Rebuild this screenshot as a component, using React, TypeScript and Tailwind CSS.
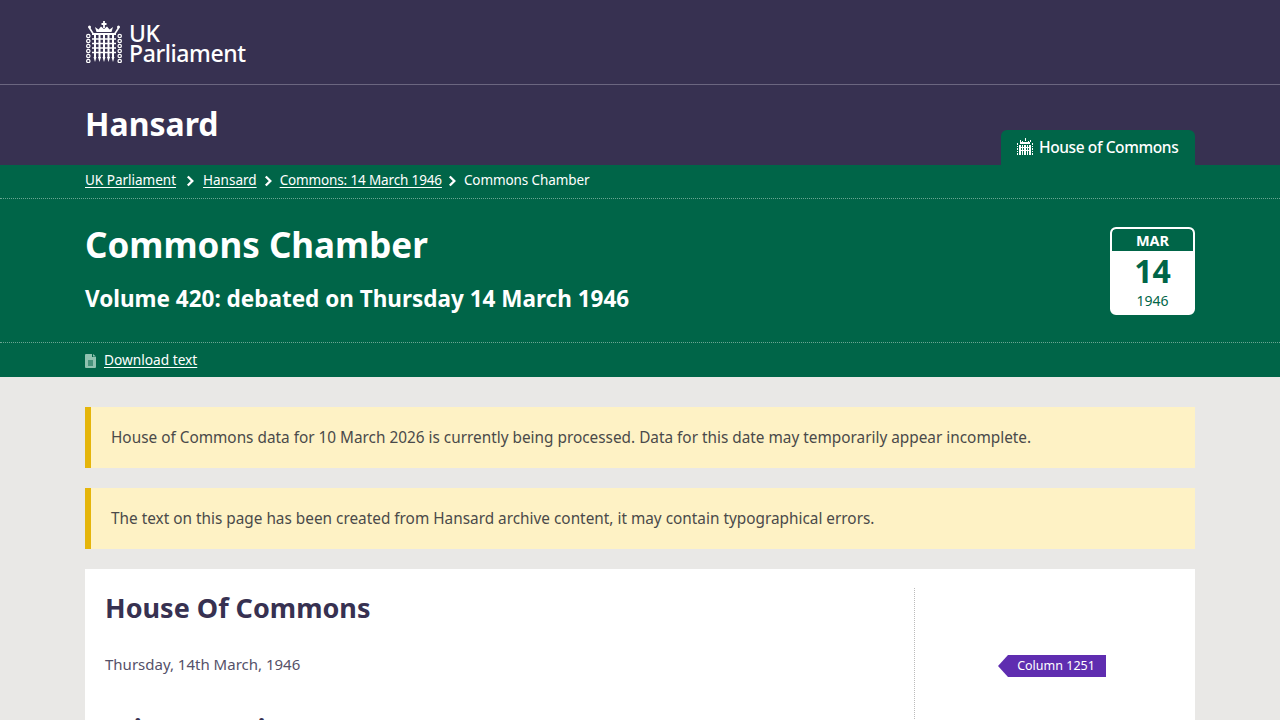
import React from "react";

const Portcullis = ({ className }: { className?: string }) => {
  const bars = [9, 13.5, 18, 22.5, 27];
  const chain = [15, 20, 25, 30, 35, 40];
  return (
    <svg viewBox="0 0 36 42" className={className} fill="none" stroke="#fff">
      <path d="M18 0v7M15.500 3h5" strokeWidth="1.800" />
      <path d="M9 6l1.500 5h15L27 6l-3.500 2.500L21 5.500l-3 2.500-3-2.500-2.500 3z" fill="#fff" stroke="none" />
      <circle cx="3.500" cy="6" r="1.500" fill="#fff" stroke="none" />
      <circle cx="32.500" cy="6" r="1.500" fill="#fff" stroke="none" />
      <path d="M3.500 7l3.500 5.500M32.500 7L29 12.500" strokeWidth="1.600" />
      <path d="M6 13h24" strokeWidth="2" />
      {bars.map((x) => (
        <path key={x} d={`M${x} 13v24`} strokeWidth="2" />
      ))}
      {bars.map((x) => (
        <path key={x} d={`M${x - 1.500} 36h3l-1.500 5z`} fill="#fff" stroke="none" />
      ))}
      {[18, 22.500, 27, 31.500].map((y) => (
        <path key={y} d={`M6 ${y}h24`} strokeWidth="1.500" />
      ))}
      {chain.map((y) => (
        <g key={y} strokeWidth="1.200">
          <circle cx="2.300" cy={y} r="1.700" />
          <circle cx="33.700" cy={y} r="1.700" />
        </g>
      ))}
    </svg>
  );
};

const SmallPortcullis = () => (
  <svg viewBox="0 0 16 19" className="w-[16px] h-[19px] shrink-0" fill="none" stroke="#fff" shapeRendering="crispEdges">
    <path d="M8 0v3M3 2v2M13 2v2M5 3v2M11 3v2" strokeWidth="1" />
    <path d="M3 5h10" strokeWidth="2" />
    <path d="M3 7v10M5.500 7v10M8 7v10M10.500 7v10M13 7v10" strokeWidth="1.100" />
    <path d="M3 9.500h10M3 12.500h10" strokeWidth="1" />
    <path d="M0.500 5v13M15.500 5v13" strokeWidth="1" strokeDasharray="1.500 1" />
  </svg>
);

const Chevron = () => (
  <svg viewBox="0 0 10 12" className="w-[9px] h-[12px] shrink-0" fill="none" stroke="#fff" strokeWidth="2.600">
    <path d="M2 1l5 5-5 5" />
  </svg>
);

const Notice = ({ children }: { children: React.ReactNode }) => (
  <div className="h-[61px] flex items-center bg-[#fef2c5] border-l-[6px] border-[#e5b50a] pl-5 text-[15.35px] text-[#4a4a4a]">
    {children}
  </div>
);

export default function App() {
  return (
    <div className="h-screen overflow-hidden bg-[#e9e8e6] font-['Noto_Sans',sans-serif]">
      <header className="bg-[#373151] border-b border-[#6b6680] h-[85px]">
        <div className="w-[1110px] mx-auto h-full flex items-center gap-[7px] pb-[1px]">
          <Portcullis className="w-[36px] h-[42px] ml-[1px]" />
          <div className="text-white text-[23px] leading-[20px] tracking-[-0.4px] font-medium pt-[2px]">
            <div>UK</div>
            <div>Parliament</div>
          </div>
        </div>
      </header>

      <div className="bg-[#373151] h-[80px]">
        <div className="w-[1110px] mx-auto h-full flex justify-between">
          <h1 className="text-white text-[32px] font-bold leading-none pt-[23px]">Hansard</h1>
          <div className="self-end h-[35px] w-[194px] bg-[#006548] rounded-t-[6px] flex items-center gap-[6px] pl-4 text-white text-[15.5px] tracking-[-0.4px] font-medium">
            <SmallPortcullis />
            House of Commons
          </div>
        </div>
      </div>

      <div className="bg-[#006548] text-white">
        <nav className="h-[34px] border-b border-dotted border-[#6aa592]">
          <div className="w-[1110px] mx-auto h-full flex items-center text-[13.5px] pb-[2px]">
            <a className="underline underline-offset-2">UK Parliament</a>
            <span className="ml-[10px] mr-[8px] flex"><Chevron /></span>
            <a className="underline underline-offset-2">Hansard</a>
            <span className="ml-[7px] mr-[7px] flex"><Chevron /></span>
            <a className="underline underline-offset-2 tracking-[-0.14px]">Commons: 14 March 1946</a>
            <span className="ml-[6px] mr-[7px] flex"><Chevron /></span>
            <span className="tracking-[-0.1px]">Commons Chamber</span>
          </div>
        </nav>

        <div className="h-[144px] border-b border-dotted border-[#6aa592]">
          <div className="w-[1110px] mx-auto h-full flex justify-between pt-[28px]">
            <div>
              <h2 className="text-[35px] font-bold leading-[36px]">Commons Chamber</h2>
              <p className="text-[22.5px] font-bold leading-[28px] mt-[22px]">Volume 420: debated on Thursday 14 March 1946</p>
            </div>
            <div className="w-[85px] h-[88px] bg-white rounded-[6px] border-2 border-white overflow-hidden flex flex-col items-center text-[#006548]">
              <div className="w-full h-[22px] bg-[#006548] text-white text-[14.5px] font-bold flex items-center justify-center leading-none rounded-t-[4px]">MAR</div>
              <div className="text-[32px] font-bold leading-[34px] mt-[3px]">14</div>
              <div className="text-[14px] leading-[16px] mt-[5px]">1946</div>
            </div>
          </div>
        </div>

        <div className="h-[34px]">
          <div className="w-[1110px] mx-auto h-full flex items-center gap-2 text-[13.7px]">
            <svg viewBox="0 0 11 14" className="w-[11px] h-[14px] mt-[2px]">
              <path d="M0 1a1 1 0 0 1 1-1h6v3h4v10a1 1 0 0 1-1 1H1a1 1 0 0 1-1-1z" fill="#8fc2b0" />
              <path d="M8 0l3 2.500H8z" fill="#8fc2b0" />
              <path d="M3 7h5M3 9h5M3 11h5" stroke="#006548" />
            </svg>
            <a className="underline underline-offset-2">Download text</a>
          </div>
        </div>
      </div>

      <main className="w-[1110px] mx-auto pt-[30px] flex flex-col gap-5">
        <Notice>House of Commons data for 10 March 2026 is currently being processed. Data for this date may temporarily appear incomplete.</Notice>
        <Notice>The text on this page has been created from Hansard archive content, it may contain typographical errors.</Notice>
        <section className="bg-white flex pt-[19px] h-[200px]">
          <div className="w-[830px] pl-5 border-r border-dotted border-[#bbbbbb]">
            <h3 className="text-[27px] font-bold text-[#373151] leading-[40px]">House Of Commons</h3>
            <p className="text-[15px] text-[#555169] mt-[26px] leading-[20px]">Thursday, 14th March, 1946</p>
            <h3 className="text-[27px] font-bold text-[#373151] leading-[40px] mt-[35px]">Private Business</h3>
          </div>
          <div className="pl-[83px] pt-[67px]">
            <div className="relative ml-[10px] h-[22px] w-[98px] bg-[#5f2db0] text-white text-[12.5px] flex items-center justify-center pr-[2px]">
              <span className="absolute -left-[10px] top-0 w-0 h-0 border-y-[11px] border-r-[10px] border-y-transparent border-r-[#5f2db0]" />
              Column 1251
            </div>
          </div>
        </section>
      </main>
    </div>
  );
}
